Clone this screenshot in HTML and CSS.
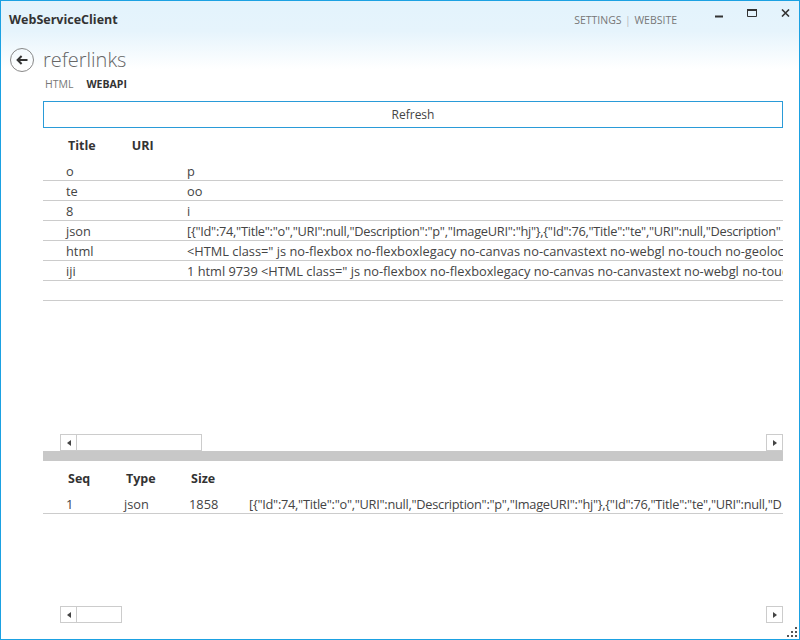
FILE: index.html
```html
<!DOCTYPE html>
<html lang="en">

<head>
    <meta charset="UTF-8">
    <meta name="viewport" content="width=device-width, initial-scale=1.0">
    <title>WebServiceClient</title>
    <link rel="stylesheet" href="styles.css">
</head>

<body>
    <div class="window">
        <div class="titlebar">
            <div class="app-name">WebServiceClient</div>
            <div class="top-links">
                <a>SETTINGS</a>
                <span class="sep">|</span>
                <a>WEBSITE</a>
            </div>
            <div class="win-btns">
                <svg class="win-min" width="8" height="3" viewBox="0 0 8 3"><rect width="8" height="2" y="0.5" fill="#333"/></svg>
                <svg width="10" height="8" viewBox="0 0 10 8"><path d="M0.5 1.5h9v6h-9z" fill="none" stroke="#333"/><rect width="10" height="2" fill="#333"/></svg>
                <svg width="9" height="8" viewBox="0 0 9 8"><path d="M1 0.5l7 7M8 0.5l-7 7" fill="none" stroke="#333" stroke-width="1.6"/></svg>
            </div>
        </div>
        <div class="heading">
            <svg class="back" width="26" height="26" viewBox="0 0 26 26">
                <circle cx="12" cy="13" r="11.5" fill="none" stroke="#888" stroke-width="1"/>
                <path d="M17.5 13H8M11.6 9L7.6 13l4 4" fill="none" stroke="#333" stroke-width="2"/>
            </svg>
            <h1>referlinks</h1>
        </div>
        <ul class="tabs">
            <li>HTML</li>
            <li class="active">WEBAPI</li>
        </ul>
        <div class="refresh">Refresh</div>

        <div class="pane pane-top">
            <div class="head head-top">
                <span>Title</span>
                <span>URI</span>
            </div>
            <ul class="rows">
                <li><span class="c-title">o</span><span>p</span></li>
                <li><span class="c-title">te</span><span>oo</span></li>
                <li><span class="c-title">8</span><span>i</span></li>
                <li><span class="c-title">json</span><span class="json">[{"Id":74,"Title":"o","URI":null,"Description":"p","ImageURI":"hj"},{"Id":76,"Title":"te","URI":null,"Description"</span></li>
                <li><span class="c-title">html</span><span>&lt;HTML class=" js no-flexbox no-flexboxlegacy no-canvas no-canvastext no-webgl no-touch no-geoloc</span></li>
                <li><span class="c-title">iji</span><span>1 html 9739 &lt;HTML class=" js no-flexbox no-flexboxlegacy no-canvas no-canvastext no-webgl no-touc</span></li>
                <li></li>
            </ul>
            <div class="hscroll">
                <div class="arrow"><i class="tri-left"></i></div>
                <div class="thumb thumb-top"></div>
                <div class="track"></div>
                <div class="arrow"><i class="tri-right"></i></div>
            </div>
        </div>

        <div class="splitter"></div>

        <div class="pane pane-bottom">
            <div class="head head-bottom">
                <span class="h-seq">Seq</span>
                <span class="c-type">Type</span>
                <span class="c-size">Size</span>
            </div>
            <ul class="rows rows-bottom">
                <li><span class="c-seq">1</span><span class="c-type">json</span><span class="c-size">1858</span><span class="json">[{"Id":74,"Title":"o","URI":null,"Description":"p","ImageURI":"hj"},{"Id":76,"Title":"te","URI":null,"D</span></li>
            </ul>
            <div class="hscroll">
                <div class="arrow"><i class="tri-left"></i></div>
                <div class="thumb thumb-bottom"></div>
                <div class="track"></div>
                <div class="arrow"><i class="tri-right"></i></div>
            </div>
        </div>

        <svg class="grip" width="11" height="11" viewBox="0 0 11 11" fill="#555">
            <rect x="8" y="0" width="2" height="2"/>
            <rect x="4" y="4" width="2" height="2"/>
            <rect x="8" y="4" width="2" height="2"/>
            <rect x="0" y="8" width="2" height="2"/>
            <rect x="4" y="8" width="2" height="2"/>
            <rect x="8" y="8" width="2" height="2"/>
        </svg>
    </div>
</body>

</html>
```

FILE: styles.css
```css
* {
    margin: 0;
    padding: 0;
    box-sizing: border-box;
    list-style: none;
}

body {
    width: 800px;
    height: 640px;
    overflow: hidden;
    font-family: "Open Sans", "Noto Sans", sans-serif;
    font-size: 12px;
    color: #444;
    background: #fff;
}

.window {
    position: relative;
    width: 800px;
    height: 640px;
    border: 1px solid #1ba1e2;
    background: linear-gradient(#e3f3fc 0, #e6f4fc 30px, #fff 68px);
    display: flex;
    flex-direction: column;
    overflow: hidden;
}

.titlebar {
    height: 44px;
    display: flex;
    align-items: flex-start;
    padding-left: 8px;
}

.app-name {
    font-size: 12.5px;
    font-weight: 700;
    color: #333;
    margin-top: 10px;
}

.top-links {
    margin-left: auto;
    margin-top: 12px;
    display: flex;
    gap: 3.5px;
    font-size: 10.5px;
    color: #777;
}

.top-links .sep {
    color: #bbb;
}

.win-btns {
    width: 113px;
    margin-left: 9px;
    padding: 8px 9px 0 29px;
    display: flex;
    justify-content: space-between;
    align-items: flex-start;
}

.win-min {
    margin-top: 6px;
}

.heading {
    height: 29px;
    display: flex;
    align-items: center;
    padding-left: 9px;
}

.back {
    margin-right: 7px;
}

.heading h1 {
    font-size: 20px;
    font-weight: 300;
    color: #666;
    margin-top: -1px;
}

.tabs {
    display: flex;
    gap: 13px;
    height: 27px;
    padding: 3px 0 0 44px;
    font-size: 10.5px;
    color: #777;
}

.tabs .active {
    font-weight: 700;
    color: #333;
}

.refresh {
    width: 740px;
    height: 27px;
    margin-left: 42px;
    border: 1px solid #2a9bd8;
    text-align: center;
    line-height: 24px;
    padding-top: 1px;
    color: #444;
}

.pane {
    margin-left: 42px;
    width: 740px;
    display: flex;
    flex-direction: column;
}

.pane-top {
    height: 323px;
}

.pane-bottom {
    height: 162px;
}

.head {
    display: flex;
    font-weight: 700;
    color: #333;
    font-size: 12.5px;
}

.head-top {
    height: 33px;
    padding: 9px 0 0 25px;
    gap: 36px;
}

.head-bottom {
    height: 33px;
    padding-top: 9px;
}

.h-seq {
    flex: none;
    width: 83px;
    padding-left: 25px;
}

.rows {
    flex: 1;
    overflow: hidden;
}

.rows li {
    height: 20px;
    line-height: 18px;
    padding-top: 1px;
    border-bottom: 1px solid #ccc;
    padding-left: 23px;
    display: flex;
    white-space: nowrap;
    overflow: hidden;
    font-size: 12.8px;
}

/* quotes run narrower in the original font */
.json {
    letter-spacing: -0.28px;
}

.c-title {
    flex: none;
    width: 121px;
}

.rows-bottom li {
    padding-left: 0;
}

.c-seq {
    flex: none;
    width: 81px;
    padding-left: 23px;
}

.c-type {
    flex: none;
    width: 65px;
}

.c-size {
    flex: none;
    width: 60px;
}

.hscroll {
    flex: none;
    height: 17px;
    margin-left: 17px;
    display: flex;
}

.arrow {
    flex: none;
    width: 17px;
    height: 17px;
    border: 1px solid #ccc;
    display: flex;
    align-items: center;
    justify-content: center;
    background: #fff;
}

.tri-left,
.tri-right {
    display: block;
    border-top: 3.5px solid transparent;
    border-bottom: 3.5px solid transparent;
}

.tri-left {
    border-right: 4px solid #444;
}

.tri-right {
    border-left: 4px solid #444;
}

.thumb {
    flex: none;
    height: 17px;
    border: 1px solid #ccc;
    border-left: 0;
}

.thumb-top {
    width: 125px;
}

.thumb-bottom {
    width: 45px;
}

.track {
    flex: 1;
}

.splitter {
    flex: none;
    height: 10px;
    margin-left: 42px;
    width: 740px;
    background: #c8c8c8;
}

.grip {
    position: absolute;
    right: 1px;
    bottom: 1px;
}
```
